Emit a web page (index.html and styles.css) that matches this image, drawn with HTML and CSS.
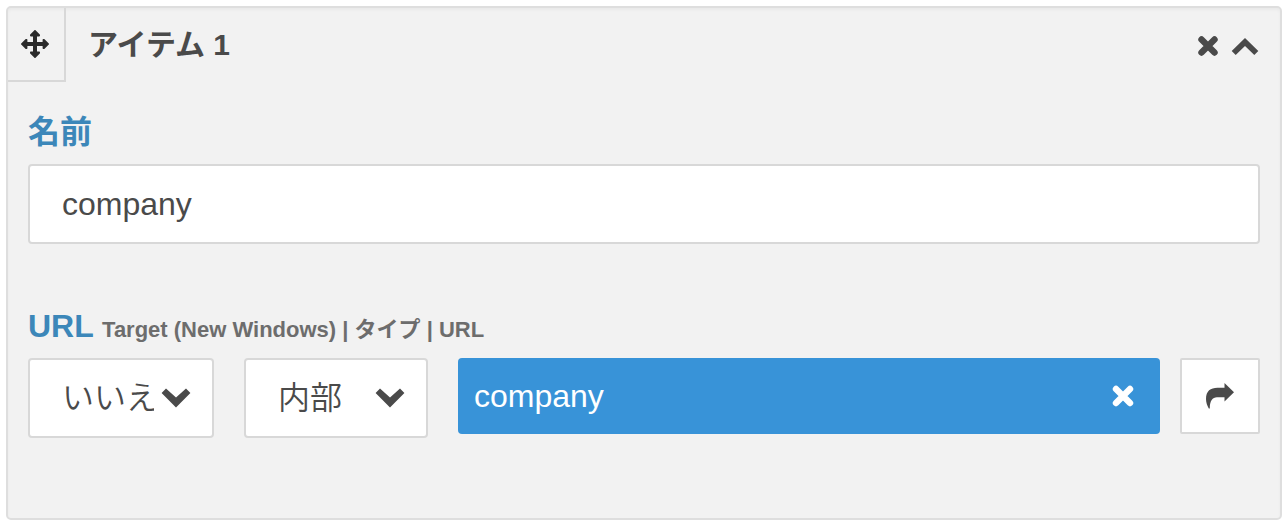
FILE: index.html
```html
<!DOCTYPE html>
<html lang="ja">
<head>
<meta charset="utf-8">
<meta name="viewport" content="width=device-width, initial-scale=1">
<title>アイテム 1</title>
<link rel="stylesheet" href="styles.css">
</head>
<body>
<section class="panel">
  <header class="panel-head">
    <button type="button" class="handle" aria-label="移動">
      <svg width="28" height="28" viewBox="0 0 28 28"><path d="M14 4V24M4 14H24" fill="none" stroke="currentColor" stroke-width="4"/><path d="M14 .8L18.200 5V5.600H9.800V5ZM14 27.200L18.200 23V22.400H9.800V23ZM.8 14L5 9.800H5.600V18.200H5ZM27.200 14L23 9.800H22.400V18.200H23Z" stroke="currentColor" stroke-width="1.600" stroke-linejoin="round"/></svg>
    </button>
    <h2 class="title">アイテム 1</h2>
    <div class="actions">
      <button type="button" class="icon-button" aria-label="削除">
        <svg width="20" height="20" viewBox="0 0 20 20"><path d="M3.500 3.500L16.500 16.500M16.500 3.500L3.500 16.500" fill="none" stroke="currentColor" stroke-width="6.400" stroke-linecap="round"/></svg>
      </button>
      <button type="button" class="icon-button" aria-label="折りたたむ">
        <svg width="28" height="20" viewBox="0 0 28 20"><path d="M14 2L27.300 15L23.300 19L14 10L4.700 19L.7 15Z"/></svg>
      </button>
    </div>
  </header>
  <div class="panel-body">
    <div class="field">
      <label class="label" for="name">名前</label>
      <input class="text-input" id="name" type="text" value="company">
    </div>
    <div class="field">
      <div class="label">URL <small class="hint">Target (New Windows) | タイプ | URL</small></div>
      <div class="row">
        <div class="select-box target-box">
          <select class="select" aria-label="Target (New Windows)"><option>いいえ</option><option>はい</option></select>
          <svg class="chevron" width="30" height="20" viewBox="0 0 30 20"><path d="M15 19.500L.6 5L5 .6L15 9.500L25 .6L29.400 5Z"/></svg>
        </div>
        <div class="select-box type-box">
          <select class="select" aria-label="タイプ"><option>内部</option><option>外部</option></select>
          <svg class="chevron" width="30" height="20" viewBox="0 0 30 20"><path d="M15 19.500L.6 5L5 .6L15 9.500L25 .6L29.400 5Z"/></svg>
        </div>
        <div class="tag">
          <span class="tag-text">company</span>
          <button type="button" class="icon-button" aria-label="解除">
            <svg width="22" height="22" viewBox="0 0 22 22"><path d="M4 4L18 18M18 4L4 18" fill="none" stroke="currentColor" stroke-width="6.400" stroke-linecap="round"/></svg>
          </button>
        </div>
        <button type="button" class="go" aria-label="開く">
          <svg width="28" height="26" viewBox="0 0 28 26"><path d="M18.500 0L28 9.200L18.500 18.400V14.200H11C6.500 14.200 3.800 17.500 3.800 25.500H2.800C1.200 22.500 0 19.500 0 16C0 8 4.500 4.800 11.500 4.800H18.500Z"/></svg>
        </button>
      </div>
    </div>
  </div>
</section>
</body>
</html>
```
FILE: styles.css
```css
* {
  box-sizing: border-box;
}

body {
  margin: 0;
  padding: 6px;
  background: #fff;
  color: #4a4a4a;
  font-family: "Liberation Sans", "Noto Sans CJK JP", sans-serif;
}

button {
  padding: 0;
  border: 0;
  background: none;
  color: inherit;
  cursor: pointer;
}

svg {
  display: block;
  fill: currentColor;
}

.panel {
  border: 2px solid #dedede;
  border-radius: 5px;
  background: #f2f2f2;
  box-shadow: inset 0 2px 3px rgba(0, 0, 0, 0.04);
}

.panel-head {
  display: flex;
  align-items: flex-start;
}

.handle {
  display: grid;
  place-items: center;
  width: 58px;
  height: 74px;
  padding-right: 2px;
  border: solid #d8d8d8;
  border-width: 0 2px 2px 0;
  color: #2b2b2b;
}

.title {
  flex: 1;
  margin: 0 0 0 22px;
  font-size: 30px;
  line-height: 74px;
}

.actions {
  display: flex;
  align-items: center;
  gap: 13px;
  height: 76px;
  padding-right: 21px;
}

.panel-body {
  padding: 24px 20px 80px;
}

.field + .field {
  margin-top: 58px;
}

.label {
  display: block;
  height: 56px;
  color: #3c87b9;
  font-size: 32px;
  font-weight: bold;
  line-height: 48px;
}

.hint {
  color: #6d6d6d;
  font-size: 22px;
}

.text-input,
.select {
  display: block;
  width: 100%;
  height: 80px;
  padding: 0 32px;
  border: 2px solid #d8d8d8;
  border-radius: 4px;
  background: #fff;
  color: #4a4a4a;
  font-family: inherit;
  font-size: 32px;
}

.row {
  display: flex;
  align-items: flex-start;
}

.select-box {
  position: relative;
  margin-right: 30px;
}

.target-box {
  width: 186px;
}

.type-box {
  width: 184px;
}

.select {
  padding-right: 58px;
  appearance: none;
  font-family: "Liberation Sans", "Noto Sans CJK JP DemiLight", "Noto Sans CJK JP", sans-serif;
  font-weight: 350;
}

.chevron {
  position: absolute;
  top: 30px;
  right: 23px;
  pointer-events: none;
}

.tag {
  display: flex;
  flex: 1;
  align-items: center;
  justify-content: space-between;
  height: 76px;
  margin-right: 20px;
  padding: 0 26px 0 16px;
  border-radius: 4px;
  background: #3893d8;
  color: #fff;
  font-size: 32px;
}

.go {
  display: grid;
  place-items: center;
  width: 80px;
  height: 76px;
  border: 2px solid #d8d8d8;
  border-radius: 2px;
  background: #fff;
}
```
